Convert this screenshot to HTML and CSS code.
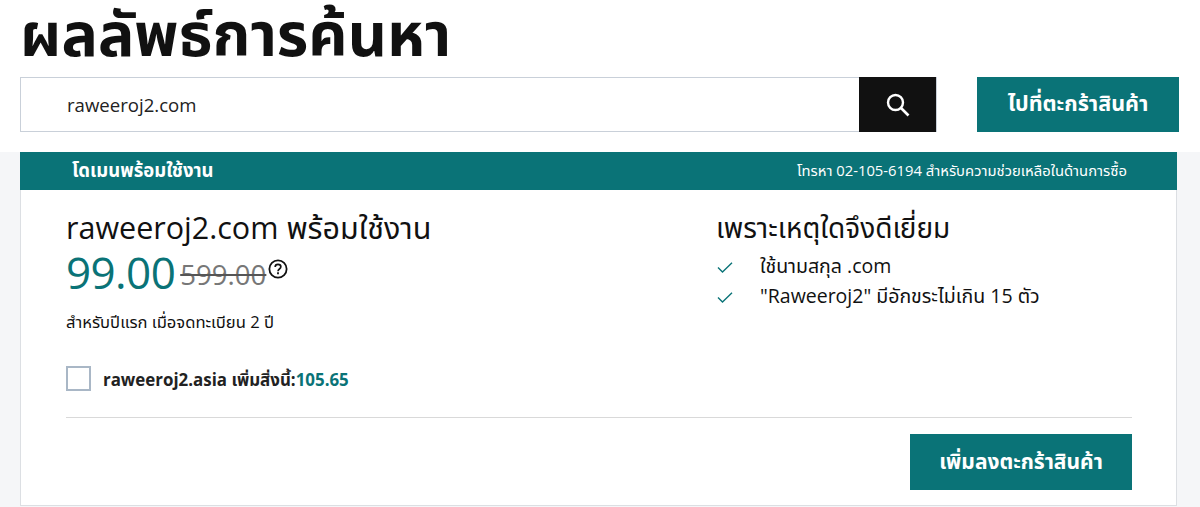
FILE: index.html
```html
<!DOCTYPE html>
<html lang="th">
<head>
    <meta charset="UTF-8">
    <meta name="viewport" content="width=device-width, initial-scale=1.0">
    <title>ผลลัพธ์การค้นหา</title>
    <link rel="stylesheet" href="styles.css">
</head>
<body>
    <header class="top">
        <h1>ผลลัพธ์การค้นหา</h1>
        <div class="search-row">
            <div class="search">
                <input type="text" class="search-input" value="raweeroj2.com">
                <button class="search-btn" aria-label="ค้นหา">
                    <svg width="26" height="26" viewBox="0 0 26 26" fill="none" stroke="#fff">
                        <circle cx="10.5" cy="10.5" r="7.5" stroke-width="2.4"/>
                        <path d="M16 16l7.5 7.5" stroke-width="2.6"/>
                    </svg>
                </button>
            </div>
            <button class="cart-btn">ไปที่ตะกร้าสินค้า</button>
        </div>
    </header>
    <main class="section">
        <div class="card">
            <div class="card-head">
                <span class="card-title">โดเมนพร้อมใช้งาน</span>
                <span class="card-phone">โทรหา 02-105-6194 สำหรับความช่วยเหลือในด้านการซื้อ</span>
            </div>
            <div class="card-body">
                <div class="columns">
                    <div class="offer">
                        <h2 class="offer-title">raweeroj2.com พร้อมใช้งาน</h2>
                        <div class="price">
                            <span class="price-now">99.00</span>
                            <span class="price-old">599.00</span>
                            <svg class="help" width="20" height="20" viewBox="0 0 19 19" fill="none" stroke="#111">
                                <circle cx="9.5" cy="9.5" r="8.2" stroke-width="1.7"/>
                                <path d="M6.8 7.6c0-1.6 1.2-2.5 2.7-2.5s2.7 0.9 2.7 2.3c0 2.1-2.7 2.1-2.7 4.2" stroke-width="1.6"/>
                                <path d="M9.5 12.7v1.8" stroke-width="1.7"/>
                            </svg>
                        </div>
                        <p class="price-note">สำหรับปีแรก เมื่อจดทะเบียน 2 ปี</p>
                        <label class="addon">
                            <span class="check-box"></span>
                            <span class="addon-text">raweeroj2.asia เพิ่มสิ่งนี้:<span class="addon-price">105.65</span></span>
                        </label>
                    </div>
                    <div class="why">
                        <h2>เพราะเหตุใดจึงดีเยี่ยม</h2>
                        <ul>
                            <li>
                                <svg width="16" height="11" viewBox="0 0 16 11" fill="none" stroke="#0a7377" stroke-width="1.4"><path d="M1 5.5l4.5 4.5L15 .8"/></svg>
                                ใช้นามสกุล .com
                            </li>
                            <li>
                                <svg width="16" height="11" viewBox="0 0 16 11" fill="none" stroke="#0a7377" stroke-width="1.4"><path d="M1 5.5l4.5 4.5L15 .8"/></svg>
                                "Raweeroj2" มีอักขระไม่เกิน 15 ตัว
                            </li>
                        </ul>
                    </div>
                </div>
                <div class="actions">
                    <button class="add-btn">เพิ่มลงตะกร้าสินค้า</button>
                </div>
            </div>
        </div>
    </main>
</body>
</html>
```

FILE: styles.css
```css
* {
    box-sizing: border-box;
}

body {
    font-family: "Open Sans", "Noto Sans", "Noto Sans Thai", sans-serif;
    color: #111;
    background-color: white;
    margin: 0;
    padding: 0;
    height: 507px;
    overflow: hidden;
}

.top {
    height: 152px;
    padding: 0 21px 0 20px;
}

h1 {
    margin: 0;
    height: 77px;
    font-size: 60.8px;
    line-height: 66px;
    font-weight: 700;
}

.search-row {
    display: flex;
    justify-content: space-between;
    height: 55px;
}

.search {
    display: flex;
    width: 917px;
    border: 1px solid #c9d0d9;
}

.search-input {
    flex: 1;
    min-width: 0;
    padding: 0 0 0 46px;
    border: none;
    font: inherit;
    font-size: 18.6px;
    color: #222;
    outline: none;
}

.search-btn {
    display: flex;
    align-items: center;
    justify-content: center;
    width: 77px;
    margin: -1px 0;
    border: none;
    background-color: #111;
}

.cart-btn,
.add-btn {
    border: none;
    background-color: #0a7377;
    color: white;
    font: inherit;
    font-weight: 700;
}

.cart-btn {
    width: 202px;
    font-size: 21.5px;
}

.section {
    height: 355px;
    padding: 0 23px 0 20px;
    background-color: #f5f6f8;
}

.card {
    height: 354px;
    background-color: white;
    border: 1px solid #dcdfe3;
    border-top: none;
}

.card-head {
    display: flex;
    align-items: center;
    justify-content: space-between;
    height: 38px;
    margin: 0 -1px;
    padding: 0 50px 0 52px;
    background-color: #0a7377;
    color: white;
}

.card-title {
    font-size: 18.5px;
    font-weight: 700;
}

.card-phone {
    font-size: 14.8px;
}

.card-body {
    padding: 0 44px 0 45px;
}

.columns {
    display: flex;
    height: 228px;
    border-bottom: 1px solid #d9d9d9;
}

.offer {
    width: 650px;
}

h2 {
    margin: 0;
    font-size: 28px;
    line-height: 38px;
    font-weight: 400;
    padding-top: 18px;
    height: 57px;
}

.offer-title {
    font-size: 30.5px;
}

.price {
    display: flex;
    align-items: flex-start;
    height: 52px;
    margin-top: -2px;
}

.price-now {
    font-size: 44px;
    line-height: 54px;
    letter-spacing: -0.6px;
    color: #0a7377;
}

.price-old {
    margin: 11px 0 0 5px;
    font-size: 27.6px;
    line-height: 36px;
    color: #777;
    text-decoration: line-through;
    text-decoration-color: #555;
}

.help {
    margin: 14px 0 0 2px;
}

.price-note {
    margin: 0;
    padding-top: 12px;
    font-size: 16.6px;
    line-height: 26px;
}

.addon {
    display: flex;
    align-items: center;
    gap: 12px;
    height: 25px;
    margin-top: 31px;
}

.check-box {
    width: 25px;
    height: 25px;
    border: 2px solid #a9b7c6;
}

.addon-text {
    padding-top: 5px;
    font-size: 16.9px;
    font-weight: 700;
    color: #222;
}

.addon-price {
    color: #0a7377;
}

.why ul {
    list-style: none;
    margin: 0;
    padding: 5px 0 0 1px;
}

.why li {
    display: flex;
    align-items: center;
    gap: 27px;
    height: 30px;
    font-size: 19.5px;
}

.actions {
    display: flex;
    justify-content: flex-end;
    padding-top: 16px;
}

.add-btn {
    width: 222px;
    height: 56px;
    font-size: 21px;
}
```
